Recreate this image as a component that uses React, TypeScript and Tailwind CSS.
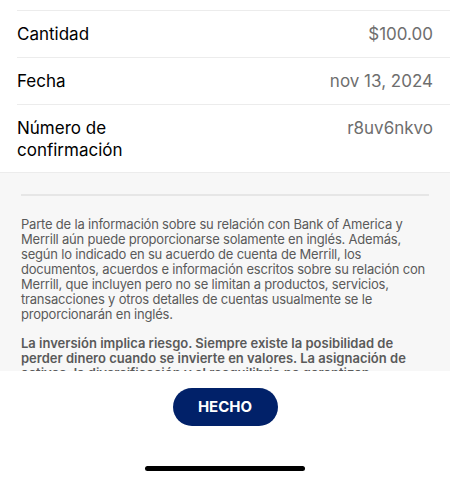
export default function App() {
  const rows = [
    { label: "Cantidad", value: "$100.00" },
    { label: "Fecha", value: "nov 13, 2024" },
  ]

  return (
    <div className="w-[450px] h-[479px] bg-white flex flex-col overflow-hidden font-['Inter',sans-serif]">
      {/* Details list */}
      <div className="pt-[10px] pl-[17px]">
        {rows.map((row) => (
          <div
            key={row.label}
            className="h-[47px] pt-[2px] border-t border-[#ececec] pr-[17px] flex items-center justify-between text-[17px]"
          >
            <span className="text-black">{row.label}</span>
            <span className="text-[#6e6e6e]">{row.value}</span>
          </div>
        ))}
        <div className="h-[68px] border-t border-[#ececec] pr-[17px] pt-[12px] flex justify-between text-[17px] leading-[22px]">
          <span className="text-black">
            Número de
            <br />
            confirmación
          </span>
          <span className="text-[#6e6e6e]">r8uv6nkvo</span>
        </div>
      </div>

      {/* Disclosures */}
      <div className="h-[199px] bg-[#f7f7f7] border-t border-[#ececec] overflow-hidden px-[21px] pt-[21px]">
        <div className="h-[2px] bg-[#e6e6e6]" />
        <div className="mt-[21px] text-[13px] leading-[15px] text-[#5a5a5a]">
          <p className="tracking-[-0.2px]">
            Parte de la información sobre su relación con Bank of America y Merrill aún puede
            proporcionarse solamente en inglés. Además, según lo indicado en su acuerdo de cuenta
            de Merrill, los documentos, acuerdos e información escritos sobre su relación con
            Merrill, que incluyen pero no se limitan a productos, servicios, transacciones y otros
            detalles de cuentas usualmente se le proporcionarán en inglés.
          </p>
          <p className="mt-[14px] font-semibold">
            La inversión implica riesgo. Siempre existe la posibilidad de perder dinero cuando se
            invierte en valores. La asignación de activos, la diversificación y el reequilibrio no
            garantizan ganancias ni protegen contra pérdidas.
          </p>
        </div>
      </div>

      {/* Footer */}
      <div className="flex-1 flex flex-col items-center pt-[17px]">
        <button className="w-[105px] h-[38px] rounded-full bg-[#012169] text-white text-[15px] font-bold">
          HECHO
        </button>
        <div className="mt-[40px] w-[160px] h-[5px] rounded-full bg-black" />
      </div>
    </div>
  )
}
